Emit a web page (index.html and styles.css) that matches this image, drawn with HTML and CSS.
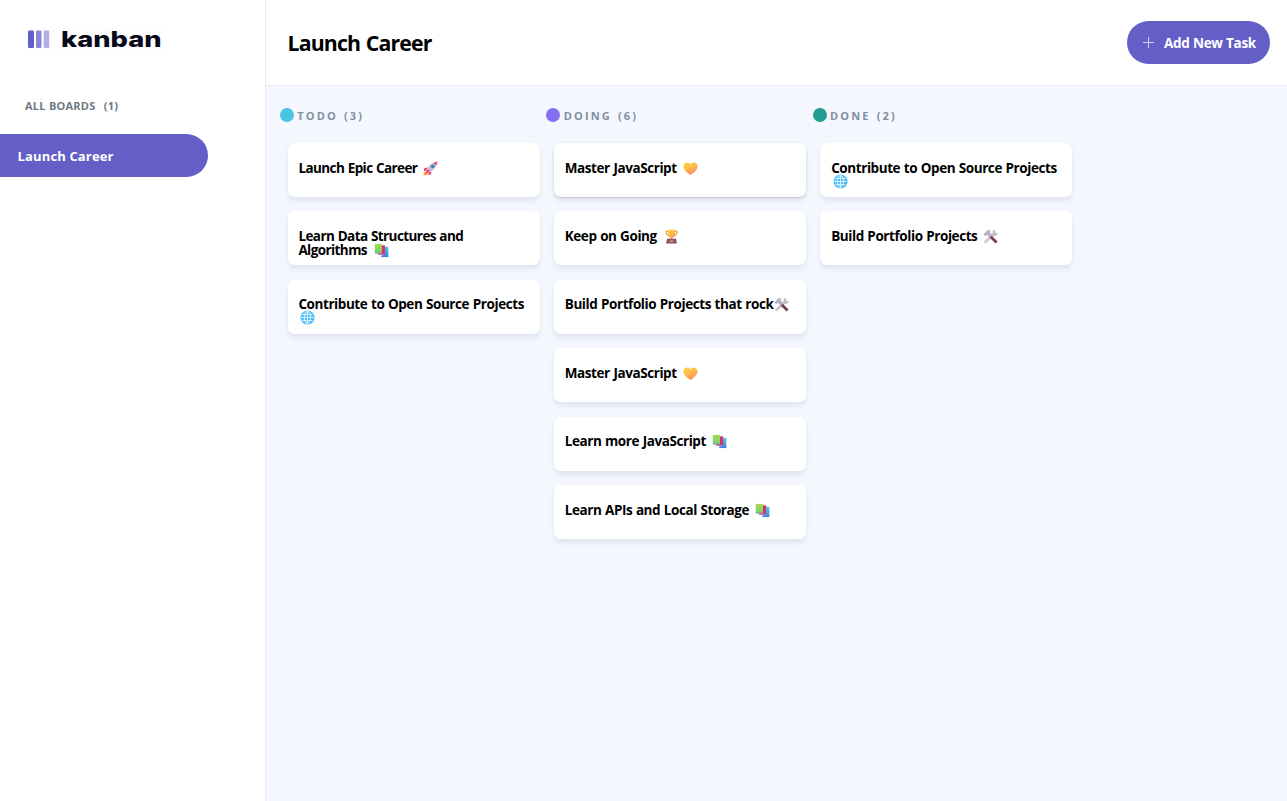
FILE: index.html
```
<!DOCTYPE html>
<html lang="en">
<head>
<meta charset="utf-8">
<title>Kanban</title>
<link rel="stylesheet" href="styles.css">
</head>
<body>
<svg class="defs" width="0" height="0" aria-hidden="true">
  <defs>
    <linearGradient id="gold" x1="0" y1="0" x2=".4" y2="1"><stop offset="0" stop-color="#ffd23c"/><stop offset=".5" stop-color="#fdbd4b"/><stop offset="1" stop-color="#fb9060"/></linearGradient>
    <linearGradient id="green" x1="0" y1="0" x2="0" y2="1"><stop offset="0" stop-color="#a2dc50"/><stop offset="1" stop-color="#74cf7c"/></linearGradient>
    <linearGradient id="blue" x1="0" y1="0" x2="0" y2="1"><stop offset="0" stop-color="#46cdf5"/><stop offset="1" stop-color="#4485df"/></linearGradient>
    <linearGradient id="sky" x1="0" y1="0" x2="1" y2="1"><stop offset="0" stop-color="#62ccfb"/><stop offset="1" stop-color="#3baef4"/></linearGradient>
  </defs>
  <symbol id="heart" viewBox="0 0 16 16"><path d="M8 15C5 12.700.5 9.700.5 5.800.5 3 2.400 1.500 4.500 1.500 6.200 1.500 7.400 2.400 8 3.600 8.600 2.400 9.800 1.500 11.500 1.500c2 0 4 1.500 4 4.300C15.500 9.700 11 12.700 8 15Z" fill="url(#gold)"/></symbol>
  <symbol id="rocket" viewBox="0 0 16 16"><path d="M5 7 1.500 7.500.8 11 4 10ZM9 11 8.500 14.500 5.500 15 6 12Z" fill="#f83c7c"/><path d="M1 12.500 4 10.500 6 12.500 3.500 15 .5 15.500Z" fill="#ff9c38"/><path d="M3.800 10.500 6 6C8 3 11 1.200 15 .8 15 5 13 8 10 10.200L5.800 12.500Z" fill="#c5bed3"/><path d="M11.300 1.800 15.500.4 14.300 4.800Z" fill="#f43c70"/><circle cx="10.400" cy="5.600" r="2" fill="#487fc0"/><path d="M6.500 9.500 3.500 12.500" stroke="#e12a68" stroke-width="1.500"/></symbol>
  <symbol id="books" viewBox="0 0 16 16"><path d="M9 4h6.300v10.500H9Z" fill="url(#blue)"/><path d="M7.500 13.500h7.800v1.500H7.500Z" fill="#4485df"/><path d="M5.500 2.500h6.300v9.500H5.500Z" fill="#df2d63"/><path d="M4 11.200h7.500v1.500H4Z" fill="#b969af"/><path d="M.8 1h7.700v10H.8Z" fill="url(#green)"/><path d="M1 10h6.500v1H1Z" fill="#8793a2"/></symbol>
  <symbol id="globe" viewBox="0 0 16 16"><circle cx="8" cy="8" r="7.500" fill="url(#sky)"/><g fill="none" stroke="#e0f8ff" stroke-width="1"><ellipse cx="8" cy="8" rx="3.300" ry="6.500"/><path d="M8 1.400v13.200M1.400 8h13.200M2.600 4.700h10.800M2.600 11.300h10.800"/></g></symbol>
  <symbol id="trophy" viewBox="0 0 16 16"><path d="M4.500 2.500H2.200V5L5 7.300M11.500 2.500h2.300V5L11 7.300" fill="none" stroke="#eca348" stroke-width="1.300"/><path d="M4 .8h8V5c0 3-1.500 4-3 4.400V12H7V9.400C5.500 9 4 8 4 5Z" fill="url(#gold)"/><path d="M3.200 10.500h9.600l1 5h-11.600Z" fill="#8b5061"/><path d="M6 12.300h4v1.300H6Z" fill="#f2ba55"/></symbol>
  <symbol id="tools" viewBox="0 0 16 16"><path d="M2 14.500 11.500 5.500" stroke="#cbc5d5" stroke-width="3"/><path d="M10 5.500 10.500 1.500 13.500 .8 12.500 3.500 14 4.500 15.500 3 15 6.500 12 7.500Z" fill="#c1bacb"/><path d="m8 8 6.500 6.500" stroke="#744152" stroke-width="3"/><path d="M.5 5.500 4.500 1.300 8.500 1 6.800 3.300 10 6.500 7 9.300 4 6.200 2.300 8Z" fill="#b8b2c5"/></symbol>
</svg>
<div class="app">
  <aside class="sidebar">
    <svg class="logo" width="138" height="24" viewBox="0 0 138 24">
      <rect width="138" height="24" fill="#fdfdfd"/>
      <rect x="3" y="3.500" width="6" height="17.500" rx="1.200" fill="#635fc7"/>
      <rect x="11" y="3.500" width="5.500" height="17.500" rx="1.200" fill="#8a87d5"/>
      <rect x="18.700" y="3.500" width="5.500" height="17.500" rx="1.200" fill="#b1afe3"/>
      <text class="logo-text" x="36" y="20" textLength="100.500" lengthAdjust="spacingAndGlyphs">kanban</text>
    </svg>
    <h4 class="boards-title">ALL BOARDS <span class="board-count">(1)</span></h4>
    <button class="board-link">Launch Career</button>
  </aside>
  <div class="main">
    <header class="header">
      <h1 class="board-name">Launch Career</h1>
      <button class="add-task"><svg class="plus" width="11" height="11" viewBox="0 0 11 11"><path d="M5.500 0v11M0 5.500h11"/></svg><span>Add New Task</span></button>
    </header>
    <main class="board">
      <section class="column">
        <div class="column-head"><i class="dot todo"></i><h4 class="column-title">TODO <span class="count">(3)</span></h4></div>
        <div class="tasks">
          <article class="card snug">Launch Epic Career <svg class="emoji"><use href="#rocket"/></svg></article>
          <article class="card snug"><span class="line">Learn Data Structures and<br>Algorithms <svg class="emoji far"><use href="#books"/></svg></span></article>
          <article class="card">Contribute to Open Source Projects<br><svg class="emoji wrapped"><use href="#globe"/></svg></article>
        </div>
      </section>
      <section class="column">
        <div class="column-head"><i class="dot doing"></i><h4 class="column-title">DOING <span class="count">(6)</span></h4></div>
        <div class="tasks">
          <article class="card raised">Master JavaScript <svg class="emoji"><use href="#heart"/></svg></article>
          <article class="card">Keep on Going <svg class="emoji far"><use href="#trophy"/></svg></article>
          <article class="card">Build Portfolio Projects that rock<svg class="emoji tight"><use href="#tools"/></svg></article>
          <article class="card">Master JavaScript <svg class="emoji"><use href="#heart"/></svg></article>
          <article class="card">Learn more JavaScript <svg class="emoji"><use href="#books"/></svg></article>
          <article class="card">Learn APIs and Local Storage <svg class="emoji"><use href="#books"/></svg></article>
        </div>
      </section>
      <section class="column">
        <div class="column-head"><i class="dot done"></i><h4 class="column-title">DONE <span class="count">(2)</span></h4></div>
        <div class="tasks">
          <article class="card">Contribute to Open Source Projects<br><svg class="emoji wrapped"><use href="#globe"/></svg></article>
          <article class="card">Build Portfolio Projects <svg class="emoji"><use href="#tools"/></svg></article>
        </div>
      </section>
    </main>
  </div>
</div>
</body>
</html>
```
FILE: styles.css
```
* { box-sizing: border-box; margin: 0; }
body { background: #fff; font-family: "Open Sans", "Noto Sans", sans-serif; color: #000; overflow: hidden; }
button { border: 0; font: inherit; }
.defs { position: absolute; }
.app { display: flex; height: 801px; }
.sidebar { width: 266px; flex: none; padding-top: 27px; border-right: 1px solid #e4ebfa; }
.logo { display: block; margin-left: 25px; }
.logo-text { font: 800 22px Inter, sans-serif; fill: #080a1b; }
.boards-title { margin: 47px 0 0 25px; font-size: 11px; line-height: 16px; font-weight: 700; letter-spacing: .25px; color: #6f7a86; white-space: nowrap; }
.board-count { margin-left: 5px; }
.board-link { display: block; margin-top: 20px; width: 208px; height: 43px; padding: 0 0 0 17.500px; text-align: left; border-radius: 0 22px 22px 0; background: #635fc7; color: #fff; font-size: 13px; font-weight: 700; letter-spacing: .15px; }
.main { flex: 1; display: flex; flex-direction: column; }
.header { height: 85px; display: flex; align-items: center; justify-content: space-between; padding: 0 17px 0 21.500px; }
.board-name { font-size: 21.300px; font-weight: 700; letter-spacing: -.85px; word-spacing: .8px; line-height: 30px; }
.add-task { width: 143px; height: 43px; border-radius: 22px; background: #635fc7; color: #fff; display: flex; align-items: center; padding: 0 0 0 16px; gap: 10px; font-size: 13.5px; font-weight: 700; letter-spacing: -.25px; white-space: nowrap; }
.plus { flex: none; fill: none; stroke: #d5d3f3; stroke-width: 1; }
.board { flex: 1; background: #f4f7fd; border-top: 1px solid #edf1f7; padding: 22px 0 0 14.300px; display: flex; gap: 14.400px; }
.column { width: 252px; }
.column-head { display: flex; height: 16px; align-items: center; gap: 3px; }
.dot { width: 14px; height: 14px; margin: 0 .3px 2px -.3px; border-radius: 50%; }
.todo { background: #49c4e5; }
.doing { background: #8471f2; }
.done { background: #219e90; }
.column-title { font-size: 11px; line-height: 16px; font-weight: 700; letter-spacing: 2.15px; color: #828fa3; white-space: nowrap; }
.count { margin-left: 1px; }
.tasks { margin: 18.950px 0 0 7.400px; display: flex; flex-direction: column; gap: 14.400px; }
.card { width: 252px; height: 54px; padding: 17.700px 0 0 10.700px; border-radius: 7px; background: #fff; box-shadow: 0 3.600px 5.400px rgba(54, 78, 126, .1); font-size: 13.500px; line-height: 14px; font-weight: 700; letter-spacing: -.42px; word-spacing: .5px; white-space: nowrap; }
.snug { letter-spacing: -.58px; }
.raised { box-shadow: 0 1px 2px rgba(60, 50, 60, .18), 0 3.600px 5.400px rgba(54, 78, 126, .1); }
.emoji { width: 15px; height: 15px; margin: 0 0 -3px 2.300px; vertical-align: baseline; }
.far { margin-left: 4px; }
.wrapped { margin: -1px 0 0 1.800px; vertical-align: top; }
.tight { margin-left: 1px; }
```
